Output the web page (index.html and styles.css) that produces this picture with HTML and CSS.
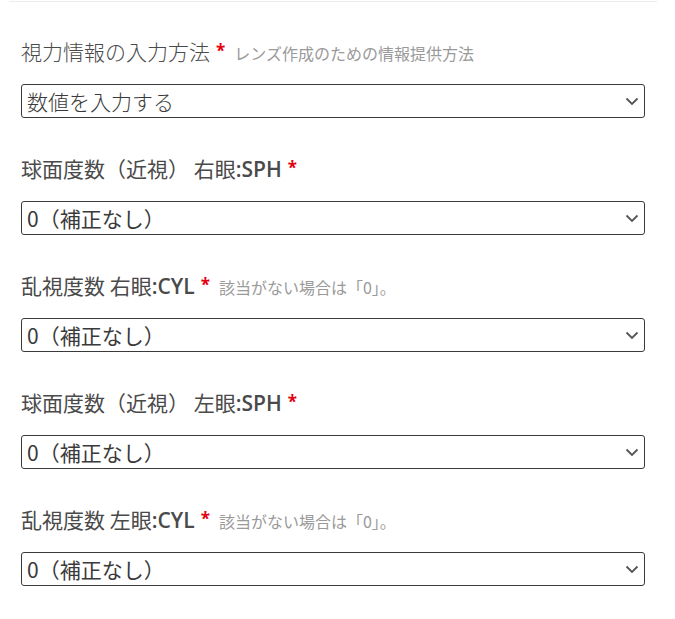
FILE: index.html
```html
<!DOCTYPE html>
<html lang="ja">
<head>
<meta charset="utf-8">
<link rel="stylesheet" href="styles.css">
</head>
<body>
<div class="panel">
  <div class="field">
    <div class="label light">視力情報の入力方法<span class="req">*</span><span class="hint">レンズ作成のための情報提供方法</span></div>
    <div class="select-wrap">
      <select class="select light"><option>数値を入力する</option></select>
      <svg class="chev" width="14" height="9" viewBox="0 0 14 9"><path d="M1.5 1.5 L7 7 L12.5 1.5" fill="none" stroke="#555" stroke-width="1.8"/></svg>
    </div>
  </div>
  <div class="field">
    <div class="label">球面度数（近視） 右眼<span class="lat">:SPH</span><span class="req">*</span></div>
    <div class="select-wrap">
      <select class="select"><option>0（補正なし）</option></select>
      <svg class="chev" width="14" height="9" viewBox="0 0 14 9"><path d="M1.5 1.5 L7 7 L12.5 1.5" fill="none" stroke="#555" stroke-width="1.8"/></svg>
    </div>
  </div>
  <div class="field">
    <div class="label">乱視度数 右眼<span class="lat">:CYL</span><span class="req">*</span><span class="hint">該当がない場合は「0」。</span></div>
    <div class="select-wrap">
      <select class="select"><option>0（補正なし）</option></select>
      <svg class="chev" width="14" height="9" viewBox="0 0 14 9"><path d="M1.5 1.5 L7 7 L12.5 1.5" fill="none" stroke="#555" stroke-width="1.8"/></svg>
    </div>
  </div>
  <div class="field">
    <div class="label">球面度数（近視） 左眼<span class="lat">:SPH</span><span class="req">*</span></div>
    <div class="select-wrap">
      <select class="select"><option>0（補正なし）</option></select>
      <svg class="chev" width="14" height="9" viewBox="0 0 14 9"><path d="M1.5 1.5 L7 7 L12.5 1.5" fill="none" stroke="#555" stroke-width="1.8"/></svg>
    </div>
  </div>
  <div class="field">
    <div class="label">乱視度数 左眼<span class="lat">:CYL</span><span class="req">*</span><span class="hint">該当がない場合は「0」。</span></div>
    <div class="select-wrap">
      <select class="select"><option>0（補正なし）</option></select>
      <svg class="chev" width="14" height="9" viewBox="0 0 14 9"><path d="M1.5 1.5 L7 7 L12.5 1.5" fill="none" stroke="#555" stroke-width="1.8"/></svg>
    </div>
  </div>
</div>
</body>
</html>
```
FILE: styles.css
```css
html, body {
  margin: 0;
  padding: 0;
  background: #fff;
}
body {
  font-family: "Noto Sans CJK JP", sans-serif;
  color: #4a4a4a;
}
.panel {
  margin-left: 9px;
  width: 648px;
  border-top: 1px solid #ececec;
  margin-top: 1px;
  padding: 34px 12px 0;
  box-sizing: border-box;
}
.field {
  height: 117px;
}
.label {
  font-size: 21px;
  line-height: 30px;
  height: 30px;
  font-weight: 400;
  color: #4a4a4a;
  white-space: nowrap;
}
.label.light {
  font-weight: 300;
}
.lat {
  font-family: "Open Sans", sans-serif;
  font-weight: 600;
}
.req {
  font-family: "Open Sans", sans-serif;
  color: #e3000f;
  font-size: 17px;
  font-weight: 700;
  margin-left: 6px;
  position: relative;
  top: -3px;
}
.hint {
  font-size: 16px;
  font-weight: 400;
  color: #9a9a9a;
  margin-left: 9px;
}
.select-wrap {
  position: relative;
  margin-top: 18px;
  height: 34px;
}
.select {
  appearance: none;
  -webkit-appearance: none;
  width: 624px;
  height: 34px;
  box-sizing: border-box;
  border: 1px solid #3a3a3a;
  border-radius: 3px;
  background: #fff;
  padding: 0 0 0 5px;
  font-family: "Noto Sans CJK JP", sans-serif;
  font-size: 21px;
  font-weight: 400;
  color: #3a3a3a;
  display: block;
}
.select.light {
  font-weight: 300;
}
.chev {
  position: absolute;
  right: 6px;
  top: 13px;
  pointer-events: none;
}
```
